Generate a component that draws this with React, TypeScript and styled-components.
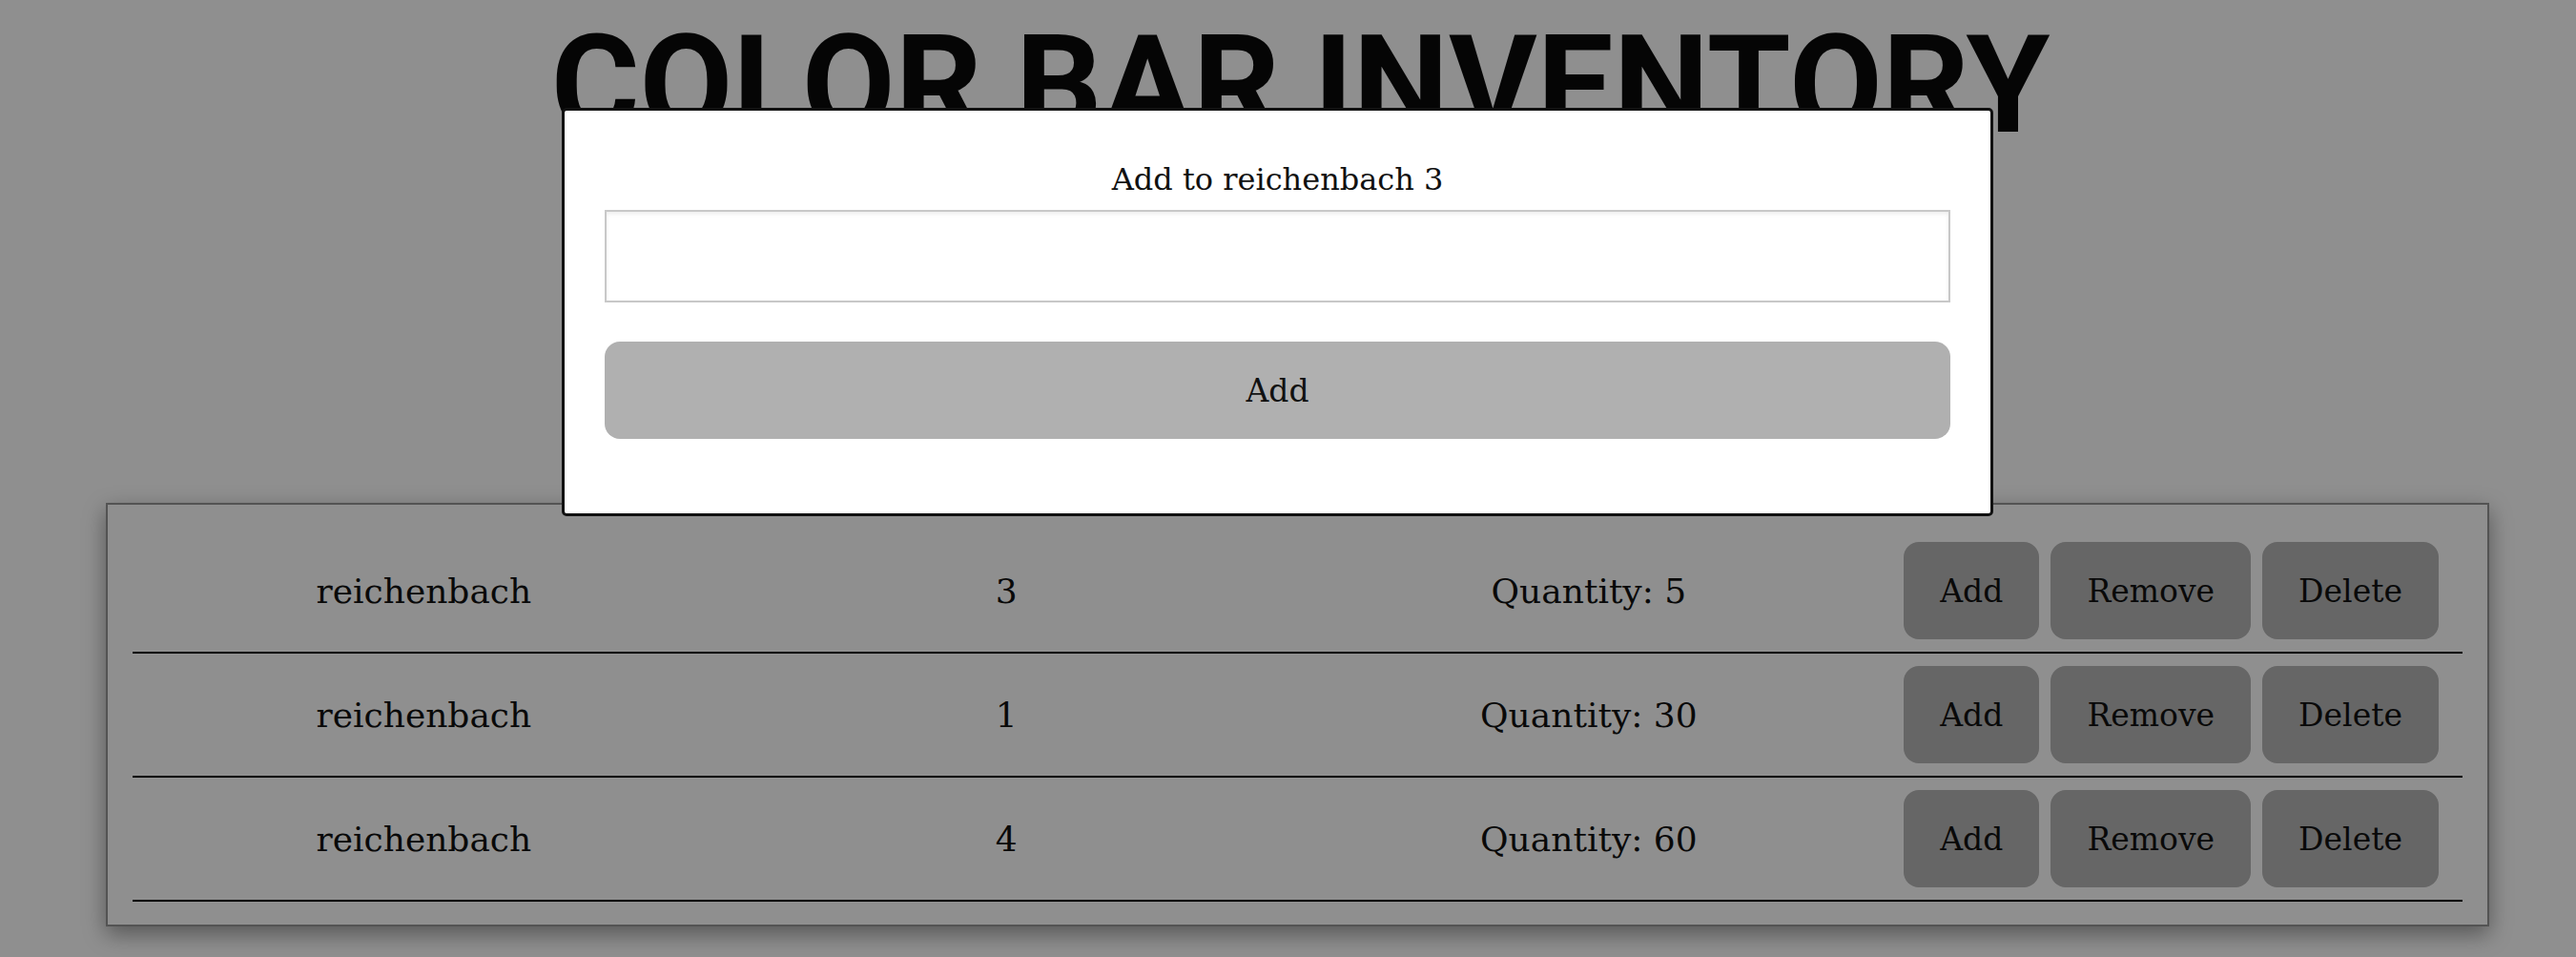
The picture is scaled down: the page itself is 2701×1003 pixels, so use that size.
import styled, { createGlobalStyle } from 'styled-components'

type Bar = { brand: string; shade: string; qty: number }

const bars: Bar[] = [
  { brand: 'reichenbach', shade: '3', qty: 5 },
  { brand: 'reichenbach', shade: '1', qty: 30 },
  { brand: 'reichenbach', shade: '4', qty: 60 },
]

const App = () => {
  return (
    <>
      <GlobalStyle />
      <Page>
        <Title>COLOR BAR INVENTORY</Title>
        <Card>
          {bars.map((bar, i) => (
            <Row key={i}>
              <Cell>{bar.brand}</Cell>
              <Cell>{bar.shade}</Cell>
              <Cell>Quantity: {bar.qty}</Cell>
              <Actions>
                <ActionButton>Add</ActionButton>
                <ActionButton>Remove</ActionButton>
                <ActionButton>Delete</ActionButton>
              </Actions>
            </Row>
          ))}
        </Card>
      </Page>

      {/* modal is open on top of the list */}
      <Overlay>
        <Modal>
          <ModalHeading>Add to reichenbach 3</ModalHeading>
          <AmountInput type='text' />
          <SubmitButton>Add</SubmitButton>
        </Modal>
      </Overlay>
    </>
  )
}

const GlobalStyle = createGlobalStyle`
  html, body {
    margin: 0;
    background: #ffffff;
    font-family: "DejaVu Serif", serif;
    min-height: 100%;
  }

  * {
    box-sizing: border-box;
  }
`

const Page = styled.main`
  padding: 6px 0 40px 20px;
`

const Title = styled.h1`
  margin: 0;
  padding-left: 6px;
  text-align: center;
  font-family: Roboto, "Liberation Sans", sans-serif;
  font-weight: 700;
  font-size: 142px;
  line-height: 168px;
  color: #0a0a0a;
`

// the list card
const Card = styled.section`
  margin: 353px 91px 0;
  padding: 26px 26px 24px;
  background: #ffffff;
  border: 2px solid #949494;
  box-shadow: 0 8px 22px rgba(0, 0, 0, 0.4);
`

const Row = styled.div`
  display: grid;
  grid-template-columns: repeat(4, 1fr);
  align-items: center;
  justify-items: center;
  padding: 13px 0;
  border-bottom: 2px solid #000000;
`

const Cell = styled.span`
  font-size: 36px;
  color: #111111;
`

const Actions = styled.div`
  display: flex;
  gap: 12px;
`

const ActionButton = styled.button`
  height: 102px;
  padding: 0 38px;
  border: none;
  border-radius: 16px;
  background: #b6b6b6;
  color: #111111;
  font-family: "DejaVu Serif", serif;
  font-size: 33px;
  cursor: pointer;
`

// dim layer behind the modal
const Overlay = styled.div`
  position: fixed;
  inset: 0;
  background: rgba(0, 0, 0, 0.44);
`

const Modal = styled.div`
  position: absolute;
  left: 589px;
  top: 113px;
  width: 1501px;
  display: flex;
  flex-direction: column;
  padding: 42px 42px 78px;
  background: #ffffff;
  border: 3px solid #111111;
  border-radius: 5px;
`

const ModalHeading = styled.p`
  margin: 11px 0 13px;
  text-align: center;
  font-size: 32px;
  color: #111111;
`

const AmountInput = styled.input`
  height: 97px;
  padding: 0 16px;
  border: 2px solid #c8c8c8;
  box-shadow: inset 0 2px 4px rgba(0, 0, 0, 0.08);
  font-family: "DejaVu Serif", serif;
  font-size: 32px;
  outline: none;
`

const SubmitButton = styled.button`
  margin-top: 41px;
  height: 102px;
  border: none;
  border-radius: 16px;
  background: #b0b0b0;
  color: #111111;
  font-family: "DejaVu Serif", serif;
  font-size: 33px;
  cursor: pointer;
`

export default App
